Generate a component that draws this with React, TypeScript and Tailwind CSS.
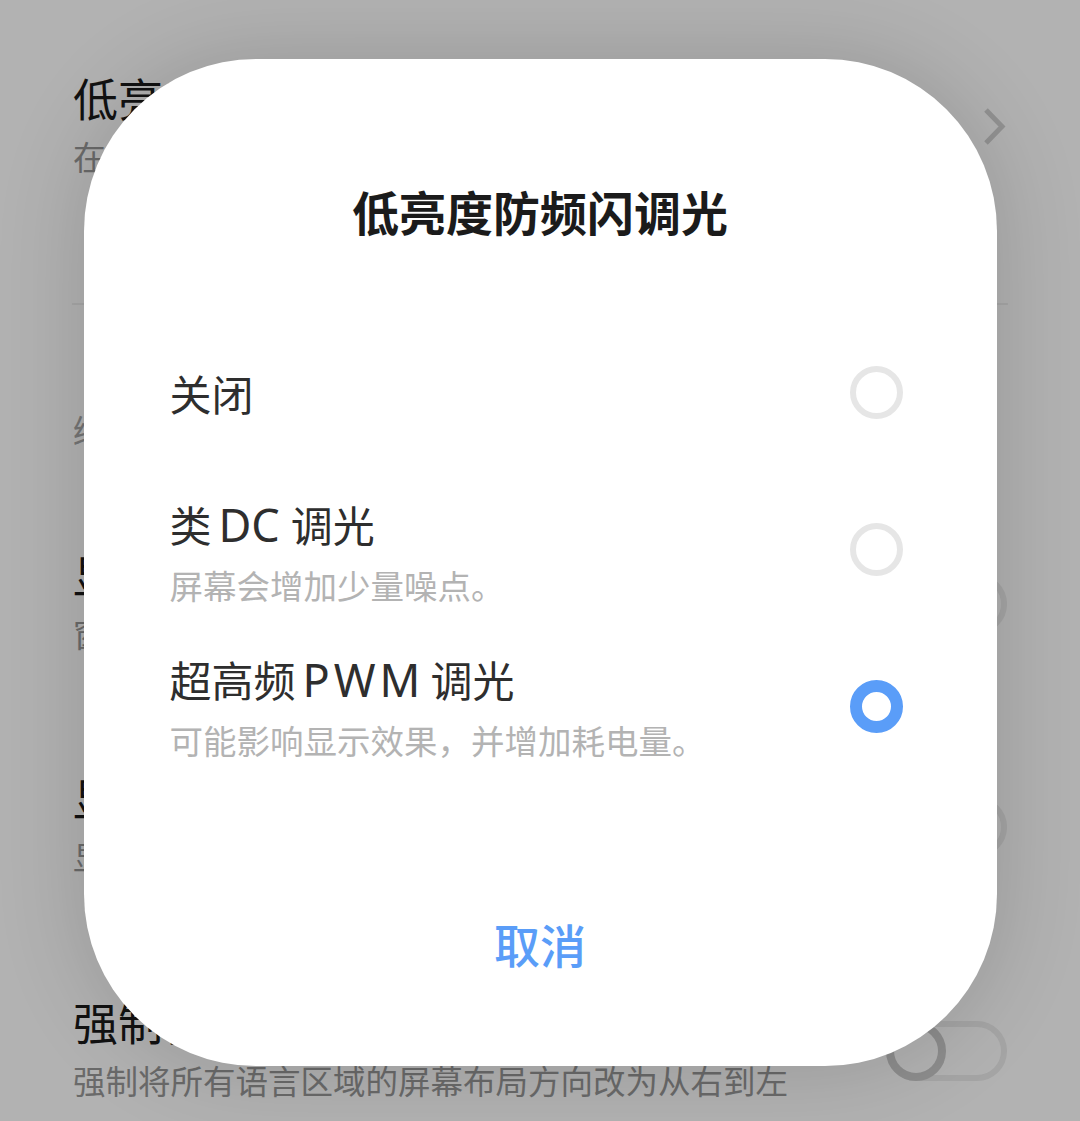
import React from "react";

const FONT = '"Noto Sans CJK SC", "Noto Sans", sans-serif';

function Toggle() {
  return (
    <div className="relative h-[60px] w-[121px] shrink-0 rounded-full border-[6px] border-[#ececec] bg-white">
      <div className="absolute left-[-6px] top-[-6px] h-[60px] w-[60px] rounded-full border-[8px] border-[#cbcbcb] bg-white" />
    </div>
  );
}

function Chevron() {
  return (
    <svg width="26" height="40" viewBox="0 0 26 40" className="shrink-0">
      <path d="M5 3 L21 19.5 L5 36" fill="none" stroke="#d2d2d2" strokeWidth="5" strokeLinejoin="miter" />
    </svg>
  );
}

function SettingRow({
  title,
  subtitle,
  right,
  className,
}: {
  title: string;
  subtitle: string;
  right: React.ReactNode;
  className?: string;
}) {
  return (
    <div className={`flex items-center justify-between ${className ?? ""}`}>
      <div className="min-w-0">
        <div className="whitespace-nowrap text-[45px] leading-[58px] text-[#1a1a1a]">{title}</div>
        <div className="whitespace-nowrap text-[32.5px] leading-[58px] text-[#999999]">{subtitle}</div>
      </div>
      {right}
    </div>
  );
}

function Radio({ checked }: { checked: boolean }) {
  return checked ? (
    <div className="h-[53px] w-[53px] shrink-0 rounded-full border-[12px] border-[#5a9df8] bg-white" />
  ) : (
    <div className="h-[53px] w-[53px] shrink-0 rounded-full border-[6px] border-[#e6e6e6] bg-white" />
  );
}

function Option({
  title,
  subtitle,
  checked,
  className,
  radioClass,
}: {
  title: React.ReactNode;
  subtitle?: string;
  checked: boolean;
  className?: string;
  radioClass?: string;
}) {
  return (
    <div className={`flex items-center justify-between ${className ?? ""}`}>
      <div>
        <div className="whitespace-nowrap text-[42px] leading-[48px] text-[#2e2e2e]">{title}</div>
        {subtitle && (
          <div className="mt-[16px] whitespace-nowrap text-[33.5px] leading-[40px] text-[#b3b3b3]">
            {subtitle}
          </div>
        )}
      </div>
      <div className={radioClass}>
        <Radio checked={checked} />
      </div>
    </div>
  );
}

export default function App() {
  return (
    <div className="relative h-[1121px] w-full overflow-hidden bg-white" style={{ fontFamily: FONT }}>
      {/* settings list underneath */}
      <div className="px-[73px] pt-[69px]">
        <SettingRow title="低亮度防频闪调光" subtitle="在低亮度下减少屏幕闪烁" right={<Chevron />} />
        <div className="-mx-px mt-[118px] h-[2px] bg-[#efefef]" />
        <div className="mt-[96px] text-[33px] leading-[58px] text-[#a8a8a8]">绘图</div>
        <SettingRow
          className="mt-[87px]"
          title="显示表面更新"
          subtitle="窗口中的表面更新时整个窗口闪烁"
          right={<Toggle />}
        />
        <SettingRow
          className="mt-[107px]"
          title="显示布局边界"
          subtitle="显示剪辑边界、边距等。"
          right={<Toggle />}
        />
        <SettingRow
          className="mt-[108px]"
          title="强制使用从右到左的布局方向"
          subtitle="强制将所有语言区域的屏幕布局方向改为从右到左"
          right={<Toggle />}
        />
      </div>

      {/* dim layer + dialog */}
      <div className="absolute inset-0 flex justify-center bg-black/30 pt-[59px]">
        <div className="h-[1007px] w-[913px] rounded-[172px] bg-white shadow-[0_0_90px_rgba(0,0,0,0.16)]">
          <div className="pt-[122px] text-center text-[47px] font-bold leading-[60px] text-[#1b1b1b]">
            低亮度防频闪调光
          </div>
          <div className="pl-[86px] pr-[94px]">
            <Option className="mt-[125px]" title="关闭" checked={false} />
            <Option
              className="mt-[81px]"
              title={
                <>
                  类<span className="ml-[7px] mr-[11px] font-['Noto_Sans',sans-serif] text-[45px]">DC</span>调光
                </>
              }
              subtitle="屏幕会增加少量噪点。"
              checked={false}
              radioClass="mb-[6px]"
            />
            <Option
              className="mt-[50px]"
              title={
                <>
                  超高频
                  <span className="ml-[7px] mr-[6px] font-['Noto_Sans',sans-serif] text-[45px] tracking-[4px]">
                    PWM
                  </span>
                  调光
                </>
              }
              subtitle="可能影响显示效果，并增加耗电量。"
              checked={true}
              radioClass="mb-[3px]"
            />
          </div>
          <div className="mt-[153px] text-center text-[46px] font-medium leading-[60px] text-[#5a9df8]">
            取消
          </div>
        </div>
      </div>
    </div>
  );
}
